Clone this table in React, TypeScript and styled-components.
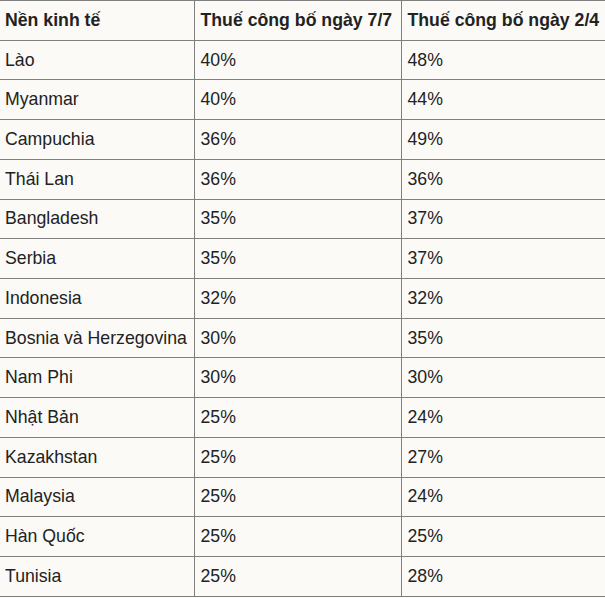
import React from 'react'
import styled, { createGlobalStyle, css } from 'styled-components'

const GlobalStyle = createGlobalStyle`
    html, body {
        margin: 0;
        padding: 0;
        background: #fbfaf7;
        overflow: hidden;
    }
    body {
        font-family: "Liberation Sans", Arial, sans-serif;
        color: #222222;
    }
`

const Table = styled.table`
    border-collapse: collapse;
    table-layout: fixed;
    width: 605px;
    font-size: 17.7px;
`

const Col = styled.col<{ $w: number }>`
    width: ${(p) => p.$w}px;
`

const Row = styled.tr`
    height: 39.73px;
`

const cellBase = css`
    border: 1px solid #808080;
    padding: 0 5px 0 6px;
    white-space: nowrap;
    overflow: hidden;
    vertical-align: middle;
    text-align: left;

    &:first-child {
        border-left: none;
        padding-left: 5px;
    }
    &:last-child {
        border-right: none;
    }
`

const HeadCell = styled.th`
    ${cellBase}
    font-weight: 700;
`

const Cell = styled.td`
    ${cellBase}
    font-weight: 400;
`

const columns = [
    { title: 'Nền kinh tế', width: 194 },
    { title: 'Thuế công bố ngày 7/7', width: 207 },
    { title: 'Thuế công bố ngày 2/4', width: 204 },
]

const rows: [string, string, string][] = [
    ['Lào', '40%', '48%'],
    ['Myanmar', '40%', '44%'],
    ['Campuchia', '36%', '49%'],
    ['Thái Lan', '36%', '36%'],
    ['Bangladesh', '35%', '37%'],
    ['Serbia', '35%', '37%'],
    ['Indonesia', '32%', '32%'],
    ['Bosnia và Herzegovina', '30%', '35%'],
    ['Nam Phi', '30%', '30%'],
    ['Nhật Bản', '25%', '24%'],
    ['Kazakhstan', '25%', '27%'],
    ['Malaysia', '25%', '24%'],
    ['Hàn Quốc', '25%', '25%'],
    ['Tunisia', '25%', '28%'],
]

const App = () => {
    return (
        <>
            <GlobalStyle />
            <Table>
                <colgroup>
                    {columns.map((c) => (
                        <Col key={c.title} $w={c.width} />
                    ))}
                </colgroup>
                <thead>
                    <Row>
                        {columns.map((c) => (
                            <HeadCell key={c.title}>{c.title}</HeadCell>
                        ))}
                    </Row>
                </thead>
                <tbody>
                    {rows.map(([name, a, b]) => (
                        <Row key={name}>
                            <Cell>{name}</Cell>
                            <Cell>{a}</Cell>
                            <Cell>{b}</Cell>
                        </Row>
                    ))}
                </tbody>
            </Table>
        </>
    )
}

export default App
